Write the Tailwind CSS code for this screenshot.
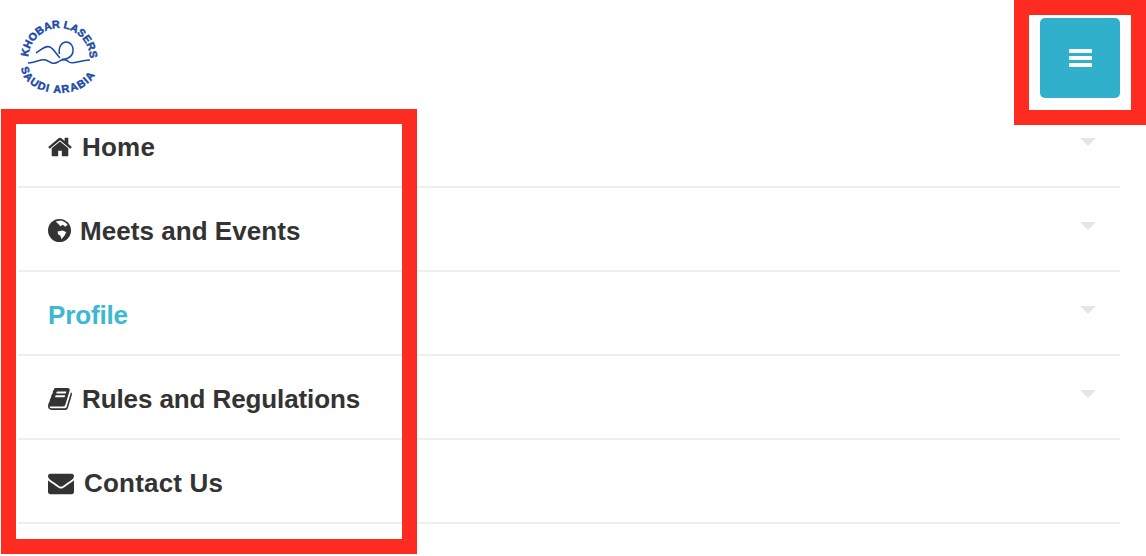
<!DOCTYPE html>
<html lang="en">
  <head>
    <meta charset="utf-8" />
    <meta name="viewport" content="width=device-width, initial-scale=1" />
    <title>Khobar Lasers</title>
    <script src="https://cdn.jsdelivr.net/npm/@tailwindcss/browser@4"></script>
  </head>
  <body class="relative h-[556px] w-[1146px] overflow-hidden bg-white font-['Liberation_Sans',_Arial,_sans-serif] text-[#333]">
    <header class="flex justify-between h-[104px] pl-[17px] pr-[26px]">
      <svg class="mt-[15px] w-[82px] h-[82px]" viewBox="17 15 82 82" fill="none">
        <defs>
          <path id="logoTop" d="M28 60 A31 32 0 0 1 90 60" />
          <path id="logoBottom" d="M21 66 A38 27 0 0 0 97 66" />
        </defs>
        <text class="font-bold" font-size="10.800" fill="#1a4aa8" stroke="#1a4aa8" stroke-width=".45"><textPath href="#logoTop" startOffset="3">KHOBAR LASERS</textPath></text>
        <text class="font-bold" font-size="10.800" fill="#1a4aa8" stroke="#1a4aa8" stroke-width=".45" letter-spacing="1.200"><textPath href="#logoBottom" startOffset="2">SAUDI ARABIA</textPath></text>
        <path d="M59.500 54 C58 47 62 42 66 42 C71 42 74 47 73 52 C72 57 66 60 62 59" stroke="#1a4aa8" stroke-width="1.500" />
        <path d="M36 53 C41 50 45 45 50 47 C54 49 56 54 60 58" stroke="#1a4aa8" stroke-width="1.500" />
        <path d="M28 63 C36 63 41 58 46 60 C50 62 53 65 58 62 C62 59 66 59 69 62 C73 65 80 60 90 60" stroke="#1a4aa8" stroke-width="1.500" />
      </svg>

      <button type="button" class="flex flex-col items-center justify-center gap-[3px] mt-[18px] w-20 h-20 rounded-[5px] bg-[#31b0cb]">
        <span class="w-[23px] h-1 rounded-[1px] bg-white"></span>
        <span class="w-[23px] h-1 rounded-[1px] bg-white"></span>
        <span class="w-[23px] h-1 rounded-[1px] bg-white"></span>
      </button>
    </header>

    <ul class="ml-[18px] mr-[26px] text-[26px] leading-[30px] font-bold">
      <li class="relative flex items-center h-[84px] pl-[30px] pt-[3px] border-b-2 border-[#eee]">
        <svg class="w-6 h-[26px] mr-2.5" viewBox="0 0 1664 1792" fill="currentColor"><path d="M1408 992v480q0 26-19 45t-45 19h-384v-384h-256v384h-384q-26 0-45-19t-19-45v-480q0-1 .5-3t.5-3l575-474 575 474q1 2 1 6zm223-69l-62 74q-8 9-21 11h-3q-13 0-21-7l-692-577-692 577q-12 8-24 7-13-2-21-11l-62-74q-8-10-7-23.500t11-21.500l719-599q32-26 76-26t76 26l244 204v-195q0-14 9-23t23-9h192q14 0 23 9t9 23v408l219 182q10 8 11 21.500t-7 23.500z" /></svg>
        <span class="tracking-[0.2px]">Home</span>
        <span class="absolute right-6 top-[34px] border-x-[8px] border-t-[8px] border-x-transparent border-t-[#e6e6e6]"></span>
      </li>
      <li class="relative flex items-center h-[84px] pl-[30px] pt-[3px] border-b-2 border-[#eee]">
        <svg class="w-[23px] h-[23px] mr-[9px]" viewBox="0 0 24 24"><circle cx="12" cy="12" r="12" fill="#333" /><path d="M8 2.500 L13 1.500 C16 2 19 3.500 20.500 6 L18 8 L15.500 6 L13 7.500 L10.500 5 Z M10 13 L15 12 L19 13.500 L17.500 17 L14 21 L13 17.500 L10.500 16 Z" fill="#fff" /></svg>
        <span class="tracking-[0.05px]">Meets and Events</span>
        <span class="absolute right-6 top-[34px] border-x-[8px] border-t-[8px] border-x-transparent border-t-[#e6e6e6]"></span>
      </li>
      <li class="relative flex items-center h-[84px] pl-[30px] pt-[3px] border-b-2 border-[#eee]">
        <span class="text-[#3cb8d2] tracking-[-0.15px]">Profile</span>
        <span class="absolute right-6 top-[34px] border-x-[8px] border-t-[8px] border-x-transparent border-t-[#e6e6e6]"></span>
      </li>
      <li class="relative flex items-center h-[84px] pl-[30px] pt-[3px] border-b-2 border-[#eee]">
        <svg class="w-6 h-[26px] mr-2.5" viewBox="0 0 1664 1792" fill="currentColor"><path d="M1639 478q40 57 18 129l-275 906q-19 64-76.500 107.500t-122.500 43.500h-923q-77 0-148.500-53.500t-99.500-131.500q-24-67-2-127 0-4 3-27t4-37q1-8-3-21.500t-3-19.500q2-11 8-21t16.500-23.500 16.500-23.500q23-38 45-91.500t30-91.500q3-10 .5-30t-.5-28q3-11 17-28t17-23q21-36 42-92t25-90q1-9-2.500-32t.5-28q4-13 22-30.500t22-22.500q19-26 42.500-84.500t27.500-96.500q1-8-3-25.500t-2-26.500q2-8 9-18t18-23 17-21q8-12 16.500-30.500t15-35 16-36 19.500-32 26.500-23.500 36-11.500 47.500 5.500l-1 3q38-9 51-9h761q74 0 114 56t18 130l-274 906q-36 119-71.500 153.500t-128.500 34.500h-869q-27 0-38 15-11 16-1 43 24 70 144 70h923q29 0 56-15.500t35-41.500l300-987q7-22 5-57 38 15 59 43zm-1064 2q-4 13 2 22.500t20 9.500h608q13 0 25.500-9.500t16.500-22.500l21-64q4-13-2-22.500t-20-9.500h-608q-13 0-25.500 9.500t-16.500 22.500zm-83 256q-4 13 2 22.500t20 9.500h608q13 0 25.500-9.500t16.500-22.500l21-64q4-13-2-22.500t-20-9.500h-608q-13 0-25.500 9.500t-16.500 22.500z" /></svg>
        <span class="tracking-[-0.1px]">Rules and Regulations</span>
        <span class="absolute right-6 top-[34px] border-x-[8px] border-t-[8px] border-x-transparent border-t-[#e6e6e6]"></span>
      </li>
      <li class="relative flex items-center h-[84px] pl-[30px] pt-[3px] border-b-2 border-[#eee]">
        <svg class="w-[26px] h-[26px] mr-2.5" viewBox="0 0 1792 1792" fill="currentColor"><path d="M1792 710v794q0 66-47 113t-113 47h-1472q-66 0-113-47t-47-113v-794q44 49 101 87 362 246 497 345 57 42 92.500 65.500t94.500 48 110 24.500h2q51 0 110-24.500t94.500-48 92.500-65.500q170-123 498-345 57-39 100-87zm0-294q0 79-49 151t-122 123q-376 261-468 325-10 7-42.500 30.500t-54 38-52 32.500-57.500 27-50 9h-2q-23 0-50-9t-57.500-27-52-32.500-54-38-42.500-30.500q-91-64-262-182.500t-205-142.500q-62-42-117-115.500t-55-136.500q0-78 41.500-130t118.500-52h1472q65 0 112.500 47t47.500 113z" /></svg>
        <span class="tracking-[0.2px]">Contact Us</span>
      </li>
    </ul>

    <!-- red annotation boxes drawn over the page -->
    <div class="absolute left-[1px] top-[109px] w-[416px] h-[445px] border-[15px] border-[#fe2c20]"></div>
    <div class="absolute left-[1014px] top-0 w-[132px] h-[125px] border-[15px] border-[#fe2c20]"></div>
  </body>
</html>
